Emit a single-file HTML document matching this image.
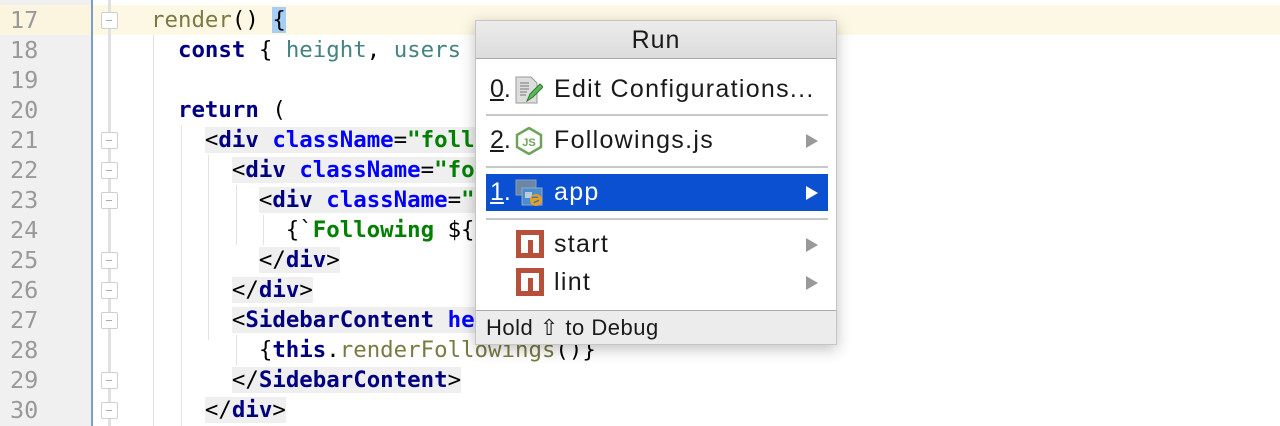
<!DOCTYPE html>
<html><head><meta charset="utf-8"><style>
body{margin:0;width:1280px;height:426px;overflow:hidden;background:#fff;position:relative;font-family:"DejaVu Sans Mono","Liberation Mono",monospace;}
.gut{position:absolute;left:0;top:0;width:92px;height:426px;background:#f0f0f0;}
.bl{position:absolute;left:91px;top:0;width:2px;height:426px;background:#7d9dc4;}
.fl{position:absolute;left:108px;top:0;width:3px;height:426px;background:#e0e0e0;}
.hl{position:absolute;left:0;top:5px;width:1280px;height:30px;background:#fdf8e3;}
.ln{position:absolute;left:10px;font-size:23.5px;color:#999;line-height:30px;}
.code{position:absolute;left:151px;font-size:22.4px;line-height:30px;white-space:pre;color:#000;}
.k{color:#000080;font-weight:bold}.a{color:#0000ff;font-weight:bold}.s{color:#008000;font-weight:bold}
.f{color:#7a7a43}.v{color:#458383}.t{background:#efefef}
.g{position:absolute;width:1px;background:#e2e2e2;}
.fm{position:absolute;left:101px;width:17px;height:17px;border:1.5px solid #cfcfcf;background:#fff;box-sizing:border-box;border-radius:2px;}
.fm:after{content:"";position:absolute;left:4px;top:6.5px;width:6px;height:1px;background:#aaa;}
.pop{position:absolute;left:475px;top:20px;width:362px;height:325px;background:#fff;border:1px solid #c5c5c5;box-sizing:border-box;box-shadow:0 4px 14px rgba(0,0,0,.25);font-family:"Liberation Sans",sans-serif;font-size:25px;color:#1a1a1a;}
.ttl{height:37px;background:linear-gradient(#ececec,#dcdcdc);border-bottom:1px solid #a8a8a8;text-align:center;line-height:38px;letter-spacing:1px;}
.it{position:absolute;left:10px;width:342px;height:37px;line-height:37px;}
.it .n{position:absolute;left:4px;}
.it .tx{position:absolute;left:68px;letter-spacing:1.3px;}
.arr{position:absolute;right:10px;top:12px;width:0;height:0;border-left:12px solid #999;border-top:7px solid transparent;border-bottom:7px solid transparent;}
.sep{position:absolute;left:10px;width:342px;height:2px;background:#c8c8c8;}
.sel{background:#0a50d0;color:#fff;}
.sel .arr{border-left-color:#fff;}
.ic{position:absolute;left:29px;top:5px;width:28px;height:28px;}
.npm{position:absolute;left:30px;width:28px;height:28px;background:#b6503a;}
.npm:after{content:"";position:absolute;left:5px;top:5px;width:18px;height:18px;background:#fff;}
.npm:before{content:"";position:absolute;left:12px;top:10px;width:5px;height:13px;background:#b6503a;z-index:1;}
.ft{position:absolute;left:0;bottom:0;width:360px;height:34px;background:#ececec;border-top:1px solid #aaa;line-height:34px;padding-left:10px;box-sizing:border-box;font-size:22px;letter-spacing:0.5px;}
</style></head><body>
<div class="hl"></div>
<div class="gut"></div><div class="hl" style="width:92px;background:#fbf5df"></div>
<div class="bl"></div><div class="fl"></div>
<div class="ln" style="top:5px">17</div><div class="ln" style="top:35px">18</div><div class="ln" style="top:65px">19</div><div class="ln" style="top:95px">20</div><div class="ln" style="top:125px">21</div><div class="ln" style="top:155px">22</div><div class="ln" style="top:185px">23</div><div class="ln" style="top:215px">24</div><div class="ln" style="top:245px">25</div><div class="ln" style="top:275px">26</div><div class="ln" style="top:305px">27</div><div class="ln" style="top:335px">28</div><div class="ln" style="top:365px">29</div><div class="ln" style="top:395px">30</div>
<div class="fm" style="top:12px"></div><div class="fm" style="top:132px"></div><div class="fm" style="top:162px"></div><div class="fm" style="top:192px"></div><div class="fm" style="top:252px"></div><div class="fm" style="top:282px"></div><div class="fm" style="top:312px"></div><div class="fm" style="top:372px"></div><div class="fm" style="top:402px"></div>
<div class="g" style="left:153px;top:35px;height:391px"></div>
<div class="g" style="left:181px;top:125px;height:301px"></div>
<div class="g" style="left:208px;top:155px;height:185px"></div>
<div class="g" style="left:236px;top:185px;height:60px"></div>
<div class="g" style="left:236px;top:335px;height:30px"></div>
<div class="g" style="left:263px;top:215px;height:30px"></div>
<div class="code" style="top:5px"><span class="f">render</span>() <span style="background:#a6cef5">{</span></div>
<div class="code" style="top:35px">  <span class="k">const</span> { <span class="v">height</span>, <span class="v">users</span> } = <span class="k">this</span>.props;</div>
<div class="code" style="top:95px">  <span class="k">return</span> (</div>
<div class="code" style="top:125px">    <span class="t">&lt;<span class="k">div</span> <span class="a">className</span>=<span class="s">"followings"</span>&gt;</span></div>
<div class="code" style="top:155px">      <span class="t">&lt;<span class="k">div</span> <span class="a">className</span>=<span class="s">"followings-header"</span>&gt;</span></div>
<div class="code" style="top:185px">        <span class="t">&lt;<span class="k">div</span> <span class="a">className</span>=<span class="s">"followings-title"</span>&gt;</span></div>
<div class="code" style="top:215px">          {`<span class="s">Following </span>${users.length}<span class="s"> Users</span>`}</div>
<div class="code" style="top:245px">        <span class="t">&lt;/<span class="k">div</span>&gt;</span></div>
<div class="code" style="top:275px">      <span class="t">&lt;/<span class="k">div</span>&gt;</span></div>
<div class="code" style="top:305px">      <span class="t">&lt;<span class="k">SidebarContent</span> <span class="a">height</span>={height - 220}&gt;</span></div>
<div class="code" style="top:335px">        {<span class="k">this</span>.<span class="f">renderFollowings</span>()}</div>
<div class="code" style="top:365px">      <span class="t">&lt;/<span class="k">SidebarContent</span>&gt;</span></div>
<div class="code" style="top:395px">    <span class="t">&lt;/<span class="k">div</span>&gt;</span></div>

<div class="pop">
<div class="ttl">Run</div>
<div class="it" style="top:50px"><span class="n"><u>0</u>.</span>
<svg class="ic" viewBox="0 0 28 28"><path d="M1 1h15l6 6v20H1z" fill="#ddd" stroke="#999"/><path d="M5 7h9M5 10h9M5 13h9M5 16h7M5 19h6" stroke="#777"/><path d="M12 25l3-7 10-10 3 3-10 10z" fill="#5cb85c" stroke="#2d7a2d"/></svg>
<span class="tx">Edit Configurations...</span></div>
<div class="sep" style="top:93px"></div>
<div class="it" style="top:101px"><span class="n"><u>2</u>.</span>
<svg class="ic" viewBox="0 0 28 28"><path d="M14 1l12 7v12l-12 7-12-7V8z" fill="none" stroke="#6da35a" stroke-width="2.5"/><text x="14" y="19" font-family="Liberation Sans" font-size="11" font-weight="bold" fill="#6da35a" text-anchor="middle">JS</text></svg>
<span class="tx">Followings.js</span><span class="arr"></span></div>
<div class="sep" style="top:145px"></div>
<div class="it sel" style="top:153px"><span class="n"><u>1</u>.</span>
<svg class="ic" viewBox="0 0 28 28"><rect x="1" y="1" width="20" height="15" fill="#6a87a8" stroke="#8a9cb4"/><rect x="7" y="9" width="20" height="17" fill="#4a8ed0" stroke="#9ab"/><rect x="10" y="13" width="7" height="6" fill="#bcd"/><circle cx="21" cy="21" r="6" fill="#e8a020"/><path d="M17 19c2-2 4 0 6-1M19 24c1-2 3-1 5-3" stroke="#3a7ab8" stroke-width="1.5" fill="none"/></svg>
<span class="tx">app</span><span class="arr"></span></div>
<div class="sep" style="top:197px"></div>
<div class="it" style="top:205px"><span class="npm" style="top:4px"></span><span class="tx">start</span><span class="arr"></span></div>
<div class="it" style="top:243px"><span class="npm" style="top:4px"></span><span class="tx">lint</span><span class="arr"></span></div>
<div class="ft">Hold ⇧ to Debug</div>
</div>
</body></html>
